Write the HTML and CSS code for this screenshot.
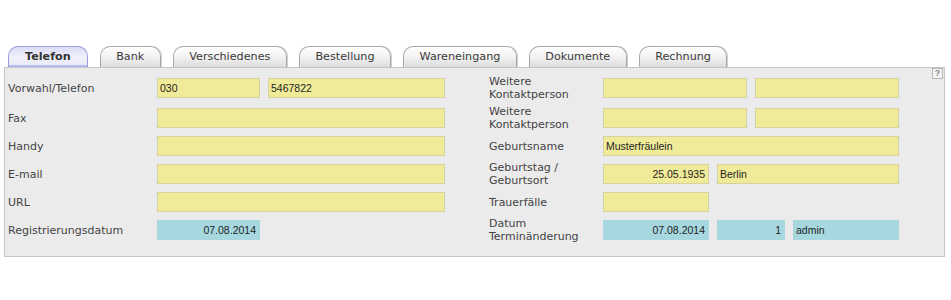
FILE: index.html
```html
<!DOCTYPE html>
<html lang="de">
<head>
<meta charset="utf-8">
<title>Telefon</title>
<link rel="stylesheet" href="styles.css">
</head>
<body>
<div class="wrap">
  <div class="tabs">
    <div class="tab active">Telefon</div>
    <div class="tab">Bank</div>
    <div class="tab">Verschiedenes</div>
    <div class="tab">Bestellung</div>
    <div class="tab">Wareneingang</div>
    <div class="tab">Dokumente</div>
    <div class="tab">Rechnung</div>
  </div>
  <div class="panel">
    <span class="help">?</span>
    <div class="form">
      <div class="lbl">Vorwahl/Telefon</div>
      <div class="fld"><span class="in y w103">030</span><span class="in y w177">5467822</span></div>
      <div class="lbl r">Weitere<br>Kontaktperson</div>
      <div class="fld"><span class="in y w144"></span><span class="in y w144"></span></div>

      <div class="lbl">Fax</div>
      <div class="fld"><span class="in y w288"></span></div>
      <div class="lbl r">Weitere<br>Kontaktperson</div>
      <div class="fld"><span class="in y w144"></span><span class="in y w144"></span></div>

      <div class="lbl">Handy</div>
      <div class="fld"><span class="in y w288"></span></div>
      <div class="lbl r">Geburtsname</div>
      <div class="fld"><span class="in y w296">Musterfräulein</span></div>

      <div class="lbl">E-mail</div>
      <div class="fld"><span class="in y w288"></span></div>
      <div class="lbl r">Geburtstag /<br>Geburtsort</div>
      <div class="fld"><span class="in y w106 num">25.05.1935</span><span class="in y w182">Berlin</span></div>

      <div class="lbl">URL</div>
      <div class="fld"><span class="in y w288"></span></div>
      <div class="lbl r">Trauerfälle</div>
      <div class="fld"><span class="in y w106"></span></div>

      <div class="lbl">Registrierungsdatum</div>
      <div class="fld"><span class="in b w103 num">07.08.2014</span></div>
      <div class="lbl r">Datum<br>Terminänderung</div>
      <div class="fld"><span class="in b w106 num">07.08.2014</span><span class="in b w68 num">1</span><span class="in b w106">admin</span></div>
    </div>
  </div>
</div>
</body>
</html>
```

FILE: styles.css
```css
html, body {
  margin: 0;
  padding: 0;
  background: #ffffff;
}
body {
  font-family: "DejaVu Sans", Verdana, sans-serif;
  font-size: 11px;
  color: #444444;
}
.wrap {
  padding: 46px 0 0 4px;
  width: 941px;
}
.tabs {
  display: flex;
  gap: 12px;
  padding-left: 4px;
  height: 21px;
  position: relative;
  z-index: 1;
}
.tab {
  height: 20px;
  line-height: 19px;
  padding: 0 15.5px;
  border: 1px solid #a9a9a9;
  border-bottom: none;
  border-radius: 10px 10px 0 0;
  background: linear-gradient(#ffffff 0%, #f4f4f4 45%, #dcdcdc 100%);
  box-shadow: 1px 0 0 #cfcfcf;
  color: #3a3a3a;
  font-size: 11.2px;
  white-space: nowrap;
}
.tab.active {
  font-weight: bold;
  padding: 0 16px;
  border-color: #9c9ce0;
  background: linear-gradient(#dcdcf6 0%, #f2f2fc 55%, #e6e6f8 100%);
  box-shadow: inset 0 -2px 0 #b8b8ec;
  color: #333;
}
.panel {
  position: relative;
  border: 1px solid #c6c6c6;
  background: #ebebeb;
  height: 190px;
  box-sizing: border-box;
  padding: 6px 0 0 3px;
}
.help {
  position: absolute;
  right: 1px;
  top: 0;
  width: 9px;
  height: 9px;
  border: 1px solid #b5b5b5;
  background: #f4f4f4;
  color: #8a8a8a;
  font: bold 9px/9px "Liberation Sans", Arial, sans-serif;
  text-align: center;
}
.form {
  display: grid;
  grid-template-columns: 149px 288px 158px 296px;
  grid-template-rows: 30px repeat(5, 28px);
}
.lbl, .fld {
  display: flex;
  align-items: center;
  height: 20px;
  margin-top: 4px;
}
.lbl {
  line-height: 13px;
  white-space: nowrap;
}
.lbl.r {
  padding-left: 44px;
}
.fld {
  gap: 8px;
}
.in {
  box-sizing: border-box;
  height: 20px;
  line-height: 18px;
  padding: 0 3px 0 2px;
  font-family: "Liberation Sans", Arial, sans-serif;
  font-size: 10.5px;
  color: #1e1e1e;
  overflow: hidden;
  white-space: nowrap;
}
.in.y {
  background: #f0eb99;
  border: 1px solid #d6d2a4;
}
.in.b {
  background: #a7d8df;
  border: 1px solid #a7d8df;
}
.in.num {
  text-align: right;
}
.w68 { width: 68px; }
.w103 { width: 103px; }
.w106 { width: 106px; }
.w144 { width: 144px; }
.w177 { width: 177px; }
.w182 { width: 182px; }
.w288 { width: 288px; }
.w296 { width: 296px; }
```
